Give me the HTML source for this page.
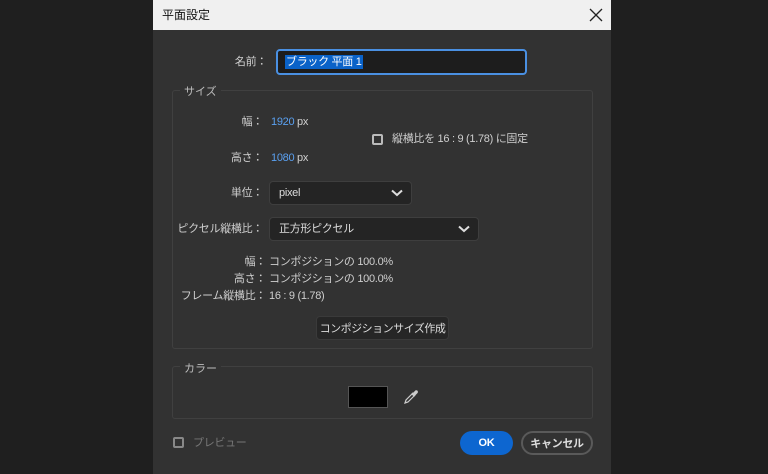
<!DOCTYPE html>
<html><head><meta charset="utf-8"><style>
*{margin:0;padding:0;box-sizing:border-box}
body{width:768px;height:474px;background:#1f1f1f;position:relative;overflow:hidden;font-family:"Liberation Sans","Noto Sans CJK JP",sans-serif;font-size:11px;color:#cfcfcf}
.dlg{position:absolute;left:153px;top:0;width:458px;height:474px;background:#323232}
.title{position:absolute;left:0;top:0;width:458px;height:30px;background:#f0f0f0;color:#111;font-size:12px;line-height:30px;padding-left:9px}
.x{position:absolute;right:6px;top:6px}
.a{position:absolute;white-space:nowrap;line-height:14px;letter-spacing:-0.3px}
.r{text-align:right}
.blue{color:#5aa0f0}
.box{position:absolute;border:1px solid #404040;border-radius:3px}
.leg{position:absolute;background:#323232;padding:0 4px;color:#bdbdbd}
.dd{position:absolute;background:#242424;border:1px solid #3e3e3e;border-radius:4px;padding-left:9px;line-height:22px;color:#ddd;letter-spacing:-0.3px}
.dd svg{position:absolute;right:8px;top:7px}
.cb{position:absolute;width:11px;height:11px;border:2px solid #bbb;border-radius:2px}
.btn{position:absolute;border-radius:12px;display:flex;align-items:center;justify-content:center;font-weight:bold;white-space:nowrap;letter-spacing:-0.3px}
</style></head><body>
<div class="dlg">
<div class="title">平面設定
<svg class="x" width="18" height="18" viewBox="0 0 18 18"><path d="M3 3L15 15M15 3L3 15" stroke="#222" stroke-width="1.3"/></svg></div>
<div class="a r" style="right:344px;top:55px;width:60px">名前：</div>
<div style="position:absolute;left:123px;top:49px;width:251px;height:26px;border:2px solid #4a90e2;border-radius:4px;background:#1d1d1d"></div>
<div class="a" style="left:132px;top:55px;background:#0a62c8;color:#fff;padding:0 1px">ブラック 平面 1</div>

<div class="box" style="left:19px;top:90px;width:421px;height:259px"></div>
<div class="leg" style="left:27px;top:83px">サイズ</div>
<div class="a r" style="right:348px;top:115px;width:40px">幅：</div>
<div class="a" style="left:118px;top:115px"><span class="blue">1920</span> px</div>
<div class="a r" style="right:348px;top:151px;width:40px">高さ：</div>
<div class="a" style="left:118px;top:151px"><span class="blue">1080</span> px</div>
<div class="cb" style="left:219px;top:134px"></div>
<div class="a" style="left:239px;top:132px">縦横比を 16 : 9 (1.78) に固定</div>

<div class="a r" style="right:348px;top:186px;width:80px">単位：</div>
<div class="dd" style="left:116px;top:181px;width:143px;height:24px">pixel<svg width="12" height="8"><path d="M1 1.5L6 6L11 1.5" stroke="#ddd" stroke-width="2" fill="none"/></svg></div>
<div class="a r" style="right:348px;top:222px;width:110px">ピクセル縦横比：</div>
<div class="dd" style="left:116px;top:217px;width:210px;height:24px">正方形ピクセル<svg width="12" height="8"><path d="M1 1.5L6 6L11 1.5" stroke="#ddd" stroke-width="2" fill="none"/></svg></div>

<div class="a r" style="right:345px;top:255px;width:110px">幅：</div>
<div class="a" style="left:116px;top:255px">コンポジションの 100.0%</div>
<div class="a r" style="right:345px;top:272px;width:110px">高さ：</div>
<div class="a" style="left:116px;top:272px">コンポジションの 100.0%</div>
<div class="a r" style="right:345px;top:289px;width:110px">フレーム縦横比：</div>
<div class="a" style="left:116px;top:289px">16 : 9 (1.78)</div>
<div style="position:absolute;left:163px;top:316px;width:133px;height:24px;background:#262626;border:1px solid #3a3a3a;border-radius:4px;display:flex;align-items:center;justify-content:center;white-space:nowrap;letter-spacing:-0.5px;color:#ddd">コンポジションサイズ作成</div>

<div class="box" style="left:19px;top:366px;width:421px;height:53px"></div>
<div class="leg" style="left:27px;top:360px">カラー</div>
<div style="position:absolute;left:195px;top:386px;width:40px;height:22px;background:#000;border:1px solid #555"></div>
<svg style="position:absolute;left:250px;top:389px" width="16" height="16" viewBox="0 0 16 16"><path d="M2 14L3 11L9 5L11 7L5 13Z" stroke="#ccc" stroke-width="1.2" fill="none"/><path d="M9 4L12 7M10 5L13 2Q14.5 2 14 3.5L11 6.5" stroke="#ccc" stroke-width="1.6" fill="#ccc"/></svg>

<div class="cb" style="left:20px;top:437px;border-color:#888"></div>
<div class="a" style="left:40px;top:436px;color:#777">プレビュー</div>
<div class="btn" style="left:307px;top:431px;width:53px;height:24px;background:#0d66d0;color:#fff">OK</div>
<div class="btn" style="left:368px;top:431px;width:72px;height:24px;border:2px solid #5a5a5a;color:#ddd">キャンセル</div>
</div>
</body></html>
